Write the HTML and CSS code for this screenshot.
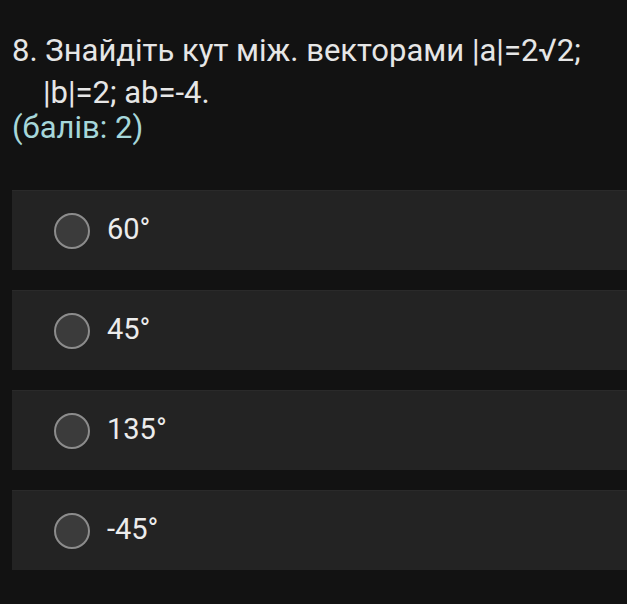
FILE: index.html
```html
<!DOCTYPE html>
<html lang="uk">
<head>
<meta charset="utf-8">
<link rel="stylesheet" href="styles.css">
</head>
<body>
<div class="quiz">
  <div class="question">
    <div class="title">8. Знайдіть кут між. векторами |a|=2√2; |b|=2; ab=-4.</div>
    <div class="points">(балів: 2)</div>
  </div>
  <div class="options">
    <div class="option"><span class="radio"></span><span class="label">60°</span></div>
    <div class="option"><span class="radio"></span><span class="label">45°</span></div>
    <div class="option"><span class="radio"></span><span class="label">135°</span></div>
    <div class="option"><span class="radio"></span><span class="label">-45°</span></div>
  </div>
</div>
</body>
</html>
```
FILE: styles.css
```css
html, body {
  margin: 0;
  padding: 0;
  background: #121212;
}
body {
  font-family: Roboto, "Noto Sans", sans-serif;
  color: #e6e6e6;
  width: 627px;
  height: 604px;
  overflow: hidden;
}
.quiz {
  padding: 30px 0 0 12px;
}
.question {
  font-size: 31px;
}
.title {
  line-height: 42px;
  padding-left: 31px;
  text-indent: -31px;
  padding-right: 10px;
}
.points {
  color: #a6d7da;
  line-height: 28px;
}
.options {
  margin-top: 48px;
  display: flex;
  flex-direction: column;
  gap: 20px;
}
.option {
  height: 80px;
  background: #232323;
  border-top: 1px solid #2a2a2a;
  box-sizing: border-box;
  display: flex;
  align-items: center;
  padding-left: 42px;
  gap: 17px;
  width: 640px;
}
.radio {
  width: 36px;
  height: 36px;
  box-sizing: border-box;
  border-radius: 50%;
  border: 2px solid #8c8c8c;
  background: #3b3b3b;
  flex: none;
}
.label {
  font-size: 29px;
  line-height: 34px;
  padding-bottom: 4px;
  color: #ececec;
}
```
